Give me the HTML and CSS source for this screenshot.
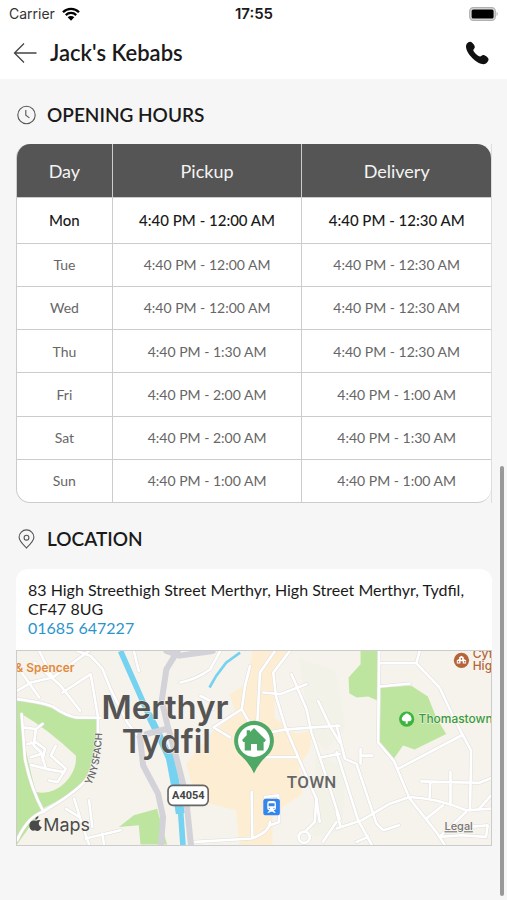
FILE: index.html
```html
<!DOCTYPE html>
<html lang="en">
<head>
<meta charset="utf-8">
<meta name="viewport" content="width=device-width, initial-scale=1">
<title>Jack's Kebabs</title>
<link rel="stylesheet" href="styles.css">
</head>
<body>
<header class="top">
  <div class="status">
    <div class="carrier">
      <span>Carrier</span>
      <svg class="wifi" viewBox="0 0 18 14" aria-hidden="true">
        <path d="M1 5.2a11.4 11.4 0 0 1 16 0M3.8 8.1a7.4 7.4 0 0 1 10.4 0" fill="none" stroke="#000" stroke-width="2.3"/>
        <path d="M5.7 10.3a4.7 4.7 0 0 1 6.6 0L9 13.7z"/>
      </svg>
    </div>
    <time class="clock">17:55</time>
    <svg class="battery" viewBox="0 0 30 14" aria-hidden="true">
      <rect x=".7" y=".7" width="25.6" height="12.6" rx="3.6" fill="#ddd" stroke="#b0b0b0" stroke-width="1.2"/>
      <rect x="2.6" y="2.5" width="22" height="9" rx="1.6"/>
      <path d="M27.6 4.8q2.2 2.2 0 4.4z" fill="#aaa"/>
    </svg>
  </div>
  <div class="bar">
    <button class="back" type="button" aria-label="Back">
      <svg viewBox="0 0 24 22" aria-hidden="true"><path d="M23.500 11H1.500M11 1.500 1.500 11l9.500 9.500" fill="none" stroke="#444" stroke-width="1.300"/></svg>
    </button>
    <h1 class="title">Jack's Kebabs</h1>
    <a class="call" href="tel:01685647227" aria-label="Call">
      <svg viewBox="0 0 24 24" aria-hidden="true"><path d="M1.200 4C1.600 2.400 3.500.8 5.300.8c1.600 0 4.500 3.300 4.500 5.200 0 1.500-1.500 2-1.500 3.300 0 1.500 5 6.300 6.700 6.300 1.400 0 1.700-1.600 3.300-1.600 1.800 0 5.300 2.700 5.300 4.300 0 2-2.500 4.900-4.900 4.900C11.800 23.200 1 12.500 1 5.500z"/></svg>
    </a>
  </div>
</header>

<main class="content">
  <section>
    <h2 class="heading">
      <svg class="heading-icon" viewBox="0 0 20 20" aria-hidden="true"><g fill="none" stroke="#555" stroke-width="1.1"><circle cx="10.500" cy="10" r="8.700"/><path d="M9.800 5v5.300l3.600 2.600"/></g></svg>
      Opening hours
    </h2>
    <div class="hours">
      <table class="hours-table">
        <thead>
          <tr><th scope="col" class="day">Day</th><th scope="col">Pickup</th><th scope="col">Delivery</th></tr>
        </thead>
        <tbody>
          <tr class="today"><td>Mon</td><td>4:40 PM - 12:00 AM</td><td>4:40 PM - 12:30 AM</td></tr>
          <tr><td>Tue</td><td>4:40 PM - 12:00 AM</td><td>4:40 PM - 12:30 AM</td></tr>
          <tr><td>Wed</td><td>4:40 PM - 12:00 AM</td><td>4:40 PM - 12:30 AM</td></tr>
          <tr><td>Thu</td><td>4:40 PM - 1:30 AM</td><td>4:40 PM - 12:30 AM</td></tr>
          <tr><td>Fri</td><td>4:40 PM - 2:00 AM</td><td>4:40 PM - 1:00 AM</td></tr>
          <tr><td>Sat</td><td>4:40 PM - 2:00 AM</td><td>4:40 PM - 1:30 AM</td></tr>
          <tr><td>Sun</td><td>4:40 PM - 1:00 AM</td><td>4:40 PM - 1:00 AM</td></tr>
        </tbody>
      </table>
    </div>
  </section>

  <section>
    <h2 class="heading">
      <svg class="heading-icon" viewBox="0 0 20 20" aria-hidden="true"><g fill="none" stroke="#555" stroke-width="1.1"><path d="M10.500 19C7.500 16 3.100 12 3.100 8.300a7.400 7.400 0 0 1 14.800 0C17.900 12 13.500 16 10.500 19z"/><circle cx="10.500" cy="8.700" r="2.400"/></g></svg>
      Location
    </h2>
    <div class="card">
      <div class="address">
        <p>83 High Streethigh Street Merthyr, High Street Merthyr, Tydfil, CF47 8UG</p>
        <a href="tel:01685647227">01685 647227</a>
      </div>
      <svg class="map" viewBox="0 0 1428 585" role="img" aria-label="Map of Merthyr Tydfil">
        <defs>
          <g id="roads">
            <g transform="translate(-18 -15)">
              <path d="M18 160Q95 170 125 182Q165 210 195 215L270 216"/>
              <path d="M200 15L240 30 275 68 300 130 350 230 385 275"/>
              <path d="M18 60L85 155M18 135L60 110 125 95 235 15M70 50L150 120 208 195M85 15L125 95M155 140L240 85 262 215 262 290Q262 345 225 405Q190 445 95 500Q50 515 18 585"/>
              <path d="M32 205L42 340Q60 430 98 500M35 245L75 250 95 235M75 250L68 300 90 320 105 370 160 380M60 335L90 325M50 295L75 290 102 310 95 345M105 370L60 358M135 300L120 330 165 370 140 410 115 405"/>
              <path d="M190 460L215 540 235 598M235 465L245 545M165 490L205 515M225 580L330 555M275 565L280 598"/>
              <path d="M370 15L385 75"/>
            </g>
            <g transform="translate(462 -15)">
              <path d="M30 110Q80 100 120 70L150 15M240 60L225 120 215 190 130 245 180 275M215 190L240 235M90 150L120 165 130 190"/>
              <path d="M315 15L270 80 262 230M360 15L310 80 318 150 345 240 400 370 440 460 435 530 405 560"/>
              <path d="M280 140L330 145 410 115M365 85L410 190 425 260 470 395 510 520M300 260L345 252 430 245 510 240M445 165L480 240 510 290M455 335L510 325M285 335L380 335M245 440L247 580M75 590L245 580Q300 560 300 530M285 455L325 450 328 530 300 540M440 460L450 530M500 530L460 590"/>
              <circle cx="403" cy="576" r="17"/>
            </g>
            <g transform="translate(963 -15)">
              <path d="M128 15L125 290 172 345 220 460 300 560 325 598"/>
              <path d="M130 52L240 52 310 125 350 210 378 265 405 315 402 495M250 15L240 52M130 122L220 113M185 370L378 268"/>
              <path d="M255 408L330 410 430 412 465 398M282 410L280 455M343 378L343 480M0 550L75 525 160 475 220 455Q310 460 390 495L465 490M430 490L465 450M270 520L320 480M310 575L390 500M310 575L375 570 450 575 455 540 400 545"/>
              <path d="M0 240L25 340 60 355 120 535 140 555 188 540M72 310L72 355M72 330L108 330M0 320L65 525 105 598M0 500L12 545M60 590L95 575"/>
            </g>
          </g>
        </defs>
        <rect width="1428" height="585" fill="#f6f3ec"/>
        <g fill="#fdeed3">
          <path d="M710 0H820L780 60 775 200 850 255 890 250 880 300 850 350 860 430 800 470 770 500 770 585 670 585 660 480 540 450 510 340 580 250 660 190 640 130 690 100z"/>
          <path d="M800 258L885 240 885 290 850 305z"/>
        </g>
        <path fill="#f3f2e9" d="M850 20L960 60 990 230 930 300 880 240zM900 310L990 350 980 540 890 560z"/>
        <g fill="#bde5a0">
          <g transform="translate(-18 -15)">
            <path d="M18 165Q100 172 150 200 190 220 262 220Q268 300 250 350 230 410 190 440L95 490 18 598V500L65 450 40 350 18 250z"/>
            <path fill="#f6f3ec" d="M32 205Q110 250 195 330 200 370 165 410 125 450 75 440 50 350 35 260z"/>
            <path d="M18 200L30 210 42 350 72 450 95 500 35 520 18 550z"/>
            <path d="M325 545L370 510 440 490 470 598H390L385 540z"/>
          </g>
          <g transform="translate(963 -15)">
            <path d="M72 15H124V165L95 152 60 155 38 142 36 95 72 55z"/>
            <path d="M133 125L225 120 275 152 300 215 330 265 235 312 200 300 172 340 130 290z"/>
          </g>
        </g>
        <use href="#roads" class="road road-edge"/>
        <use href="#roads" class="road road-fill"/>
        <g fill="none" stroke="#75d2f0">
          <path stroke-width="17" d="M312 0L365 120 400 200"/>
          <path stroke-width="22" d="M396 190L440 280 470 345"/>
          <path stroke-width="27" d="M460 310L484 440 492 490"/>
          <path stroke-width="17" d="M492 470L500 585"/>
          <path stroke-width="8" d="M672 5L630 35 600 75 580 110"/>
        </g>
        <g class="road" stroke="#d3d2d9" stroke-width="18">
          <path d="M484 0L450 55 436 150 455 230 480 320 508 430 524 585"/>
          <path d="M390 250L450 235M370 255L380 345 425 430 440 500 434 585M450 0L490 14 590 0"/>
        </g>
        <g class="map-text">
          <text class="city" x="446" y="204">Merthyr</text>
          <text class="city" x="450" y="308">Tydfil</text>
          <text class="town" x="888" y="414">TOWN</text>
          <text class="shop" x="84" y="63">&amp; Spencer</text>
          <text class="park" x="1210" y="217">Thomastown</text>
          <text class="school" x="1373" y="22">Cyf</text>
          <text class="school" x="1373" y="58">High</text>
          <text class="legal" x="1288" y="540">Legal</text>
          <text class="brand" x="79" y="543">Maps</text>
          <path id="street" fill="none" stroke="none" d="M222 405Q255 350 257 225"/>
          <text class="street"><textPath href="#street">YNYSFACH</textPath></text>
        </g>
        <path fill="#4a4a4a" transform="translate(38 497) scale(1.15 .92)" d="M29 14Q23 19 24 26 25 34 32 37 27 48 22 49 18 50 14 47 9 50 5 47-4 36 1 22 5 13 14 15L17 16Q24 11 29 14zM15 13Q14 4 23 0 24 9 15 13z"/>
        <rect x="455" y="405" width="121" height="60" rx="15" fill="#fff" stroke="#666" stroke-width="5"/>
        <text class="shield" x="516" y="447">A4054</text>
        <g transform="translate(462 -15)">
          <path fill="#50a866" d="M252 384Q239 354 212 330A60 60 0 1 1 292 330Q265 354 252 384z"/>
          <circle cx="252" cy="286" r="48" fill="#fff"/>
          <path fill="#50a866" d="M252 247L288 283 284 289H281V315H261V295H243V315H224V289H220L216 283 230 269V254H240V259z"/>
          <rect x="280" y="460" width="50" height="50" rx="8" fill="#3486ed"/>
          <path fill="#fff" fill-rule="evenodd" d="M299 467H311Q318 467 318 474V489Q318 495 311 495L318 502H312L309 499H301L298 502H292L299 495Q292 495 292 489V474Q292 467 299 467zM296 474V483H314V474zM298 487A2 2 0 1 0 298 491 2 2 0 1 0 298 487zM312 487A2 2 0 1 0 312 491 2 2 0 1 0 312 487z"/>
        </g>
        <g transform="translate(963 -15)">
          <circle cx="211" cy="220" r="23" fill="#3cb43f"/>
          <path fill="#fff" d="M208 234V227H203A8 8 0 0 1 199 213 8 8 0 0 1 205 207 8 8 0 0 1 218 207 8 8 0 0 1 224 214 8 8 0 0 1 219 227H214V234z"/>
          <circle cx="376" cy="43" r="23" fill="#b5653a"/>
          <path fill="#fff" d="M362 53V43L369 39V34L376 29 383 34V39L390 43V53H380V46H373V53z"/>
          <path fill="#b5653a" d="M365 45h4v5h-4zM384 45h4v5h-4zM374 36h4v5h-4z"/>
        </g>
      </svg>
    </div>
  </section>
</main>
<div class="scroll-thumb"></div>
</body>
</html>
```
FILE: styles.css
```css
* { box-sizing: border-box; }

body {
  margin: 0;
  min-height: 100vh;
  background: #f6f6f6;
  color: #1a1a1a;
  font-family: Lato, "Liberation Sans", sans-serif;
}

svg { display: block; }

.top { background: #fff; height: 79px; }

.status {
  display: grid;
  grid-template-columns: 1fr auto 1fr;
  align-items: center;
  height: 28px;
  padding: 0 8px 0 9px;
  font: 14px/28px Inter, "Liberation Sans", sans-serif;
}
.carrier { display: flex; align-items: center; gap: 7px; color: #333; }
.wifi { width: 18px; height: 14px; }
.clock { font-size: 15px; font-weight: 600; }
.battery { width: 30px; height: 14px; justify-self: end; }

.bar {
  display: flex;
  align-items: center;
  height: 49px;
  padding: 0 18px 0 13px;
}
.back { padding: 0; border: 0; background: none; }
.back svg { width: 24px; height: 22px; }
.title { flex: 1; margin: 0 0 0 13px; font-size: 22px; line-height: 25px; font-weight: 600; }
.call svg { width: 24px; height: 24px; fill: #111; }

.content { padding: 0 15px 24px 16px; }

.heading {
  display: flex;
  align-items: center;
  gap: 11px;
  margin: 0;
  padding-top: 6px;
  height: 65px;
  font-size: 19px;
  font-weight: 600;
  text-transform: uppercase;
}
.heading-icon { width: 20px; height: 20px; }

.hours { border-right: 1px solid #ddd; }
.hours-table {
  width: 100%;
  height: 359px;
  table-layout: fixed;
  border: 1px solid #ccc;
  border-top: 0;
  border-right: 0;
  border-radius: 14px;
  border-spacing: 0;
  overflow: hidden;
  background: #fff;
  text-align: center;
}
.hours-table th {
  height: 53px;
  padding: 0;
  background: #555;
  color: #f4f4f4;
  font-size: 18px;
  font-weight: 400;
}
.hours-table .day { width: 20%; }
.hours-table td {
  padding: 0;
  border-top: 1px solid #ccc;
  color: #666;
  font-size: 14px;
}
.hours-table th + th,
.hours-table td + td { border-left: 1px solid #ccc; }
.hours-table .today td { color: #1a1a1a; font-size: 15px; font-weight: 500; }

.card { border-radius: 12px 12px 0 0; background: #fff; margin-top: 1px; }
.address { padding: 11px 12px 13px; font-size: 16px; line-height: 19px; }
.address p { margin: 0; }
.address a { display: block; color: #2b95c9; text-decoration: none; }

.map { width: 100%; height: auto; border: 1px solid #ccc; }
.road { fill: none; stroke-linecap: round; stroke-linejoin: round; }
.road-edge { stroke: #dfdddd; stroke-width: 11px; }
.road-fill { stroke: #fff; stroke-width: 8px; }

.map-text { font-family: Inter, "Liberation Sans", sans-serif; paint-order: stroke; stroke: #f8f5ee; stroke-width: 3px; }
.city { fill: #555; font-size: 99px; font-weight: 600; text-anchor: middle; }
.town { fill: #666; font-family: Roboto, sans-serif; font-size: 51px; font-weight: 500; letter-spacing: 1px; text-anchor: middle; }
.shop { fill: #e28a3c; font-size: 36px; font-weight: 600; text-anchor: middle; }
.park { fill: #3a9b3c; font-size: 36px; font-weight: 500; }
.school { fill: #b5653a; font-size: 36px; font-weight: 500; }
.legal { fill: #777; font-size: 33px; font-weight: 500; text-decoration: underline; }
.brand { fill: #4a4a4a; font-size: 54px; font-weight: 400; }
.street { fill: #666; font-size: 30px; font-weight: 500; }
.shield { fill: #444; font-family: Roboto, sans-serif; font-size: 33px; font-weight: 700; text-anchor: middle; }

.scroll-thumb {
  position: fixed;
  top: 466px;
  right: 3px;
  bottom: 4px;
  width: 4px;
  border-radius: 2px;
  background: #999;
}
```
